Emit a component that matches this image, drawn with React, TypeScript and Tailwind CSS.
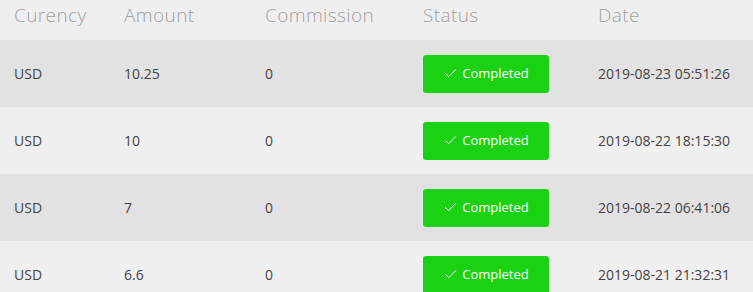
import { Check } from "lucide-react";

interface Payment {
  currency: string;
  amount: string;
  commission: string;
  date: string;
}

const payments: Payment[] = [
  { currency: "USD", amount: "10.25", commission: "0", date: "2019-08-23 05:51:26" },
  { currency: "USD", amount: "10", commission: "0", date: "2019-08-22 18:15:30" },
  { currency: "USD", amount: "7", commission: "0", date: "2019-08-22 06:41:06" },
  { currency: "USD", amount: "6.6", commission: "0", date: "2019-08-21 21:32:31" },
];

const cols = "grid grid-cols-[110px_141px_158px_175px_1fr] pl-[14px] items-center";

const App = () => {
  return (
    <div className="w-[753px] h-[292px] overflow-hidden bg-[#efefef] font-['Open_Sans',sans-serif]">
      <div className={`${cols} h-[40px] pb-[9px] text-[19px] tracking-[0.4px] font-light text-[#a0a0a0]`}>
        <span>Curency</span>
        <span>Amount</span>
        <span>Commission</span>
        <span>Status</span>
        <span>Date</span>
      </div>
      {payments.map((p, i) => (
        <div
          key={p.date}
          className={`${cols} h-[67px] text-[14px] text-[#444] ${i % 2 === 0 ? "bg-[#e2e2e2]" : "bg-[#efefef]"}`}
        >
          <span>{p.currency}</span>
          <span>{p.amount}</span>
          <span>{p.commission}</span>
          <div>
            <span className="flex items-center justify-center gap-[4px] w-[126px] h-[38px] rounded-[3px] bg-[#1bd113] text-white text-[13px]">
              <Check size={15} strokeWidth={1.6} />
              Completed
            </span>
          </div>
          <span>{p.date}</span>
        </div>
      ))}
    </div>
  );
};

export default App;
